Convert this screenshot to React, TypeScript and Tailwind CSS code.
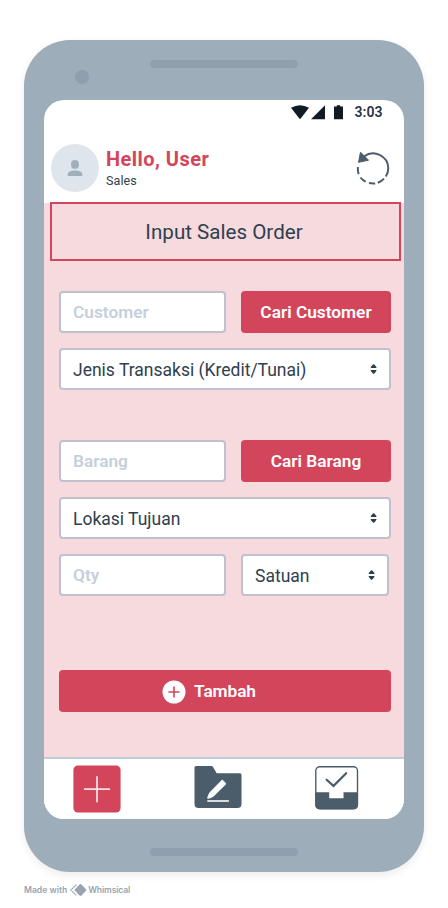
import type { ReactNode } from "react";

function SortArrows() {
  return (
    <svg width="8" height="10" viewBox="0 0 8 10" fill="#2c3e4a" className="mb-[2px] shrink-0">
      <path d="M1.3 4 Q.2 4 .8 3.100 L2.900.5 Q3.600 0 4.300.5 L6.400 3.100 Q7 4 5.900 4Z" />
      <path d="M1.3 6 Q.2 6 .8 6.900 L2.900 9.500 Q3.600 10 4.300 9.500 L6.400 6.900 Q7 6 5.900 6Z" />
    </svg>
  );
}

function Field({ children }: { children: ReactNode }) {
  return (
    <div className="flex h-[42px] w-[167px] items-center rounded-[4px] border-2 border-[#bfc1ce] bg-white pt-[2px] pl-3 text-[17.3px] font-semibold text-[#c5d0db]">
      {children}
    </div>
  );
}

function Select({ children, className }: { children: ReactNode; className?: string }) {
  return (
    <div className={`flex h-[42px] items-center justify-between rounded-[4px] border-2 border-[#bfc1ce] bg-white pt-[2px] pr-[11px] pl-3 text-[17.5px] text-[#2f404e] ${className ?? ""}`}>
      <span className="whitespace-nowrap">{children}</span>
      <SortArrows />
    </div>
  );
}

function Button({ children, className }: { children: ReactNode; className: string }) {
  return (
    <div className={`flex h-[42px] items-center justify-center rounded-[4px] bg-[#d3455b] pt-[2px] text-[17.3px] font-semibold whitespace-nowrap text-white ${className}`}>
      {children}
    </div>
  );
}

function StatusBar() {
  return (
    <div className="flex h-[25px] items-center pl-[247px]">
      <svg width="52" height="15" viewBox="0 0 52 15" fill="#101b24">
        <path d="M0 2.8 Q9 -2.3 18 2.8 L9.7 13.6 Q9 14.4 8.3 13.6Z" />
        <path d="M34 .3V14.3H20Z" />
        <path d="M45.800 .2h3.400v1.200h2.800v12.900h-9V1.400h2.800Z" />
      </svg>
      <span className="ml-[11.5px] text-[14px] font-semibold tracking-[0.1px] text-[#263541]">3:03</span>
    </div>
  );
}

function Header() {
  return (
    <div className="flex h-[78px] items-start pt-[19px] pr-[14px] pl-[7px]">
      <div className="flex size-12 items-center justify-center rounded-full bg-[#dfe5ec]">
        <svg width="16" height="16" viewBox="0 0 16 16" fill="#9fafbc">
          <rect x="4.100" y="0" width="7.800" height="8.800" rx="3.900" />
          <path d="M.7 16v-1.500C.7 11.500 4 10.500 8 10.500s7.300 1 7.300 4V16Z" />
        </svg>
      </div>
      <div className="ml-[7px] flex flex-col">
        <span className="mt-[2px] text-[20px] leading-[26px] font-bold tracking-[0.45px] text-[#d3455b]">Hello, User</span>
        <span className="text-[12.500px] leading-[18px] tracking-[0.1px] text-[#2f404e]">Sales</span>
      </div>
      <svg width="34" height="34" viewBox="0 0 34 34" className="mt-[7px] ml-auto" fill="none" stroke="#4b5d6b" strokeWidth="2">
        <path d="M8 5.500A15.200 15.200 0 0 1 32.300 17Q32.300 22 29.800 25.500" />
        <path d="M28 27.700Q25.500 30.500 21.800 31.800M19.200 32.400Q16.500 32.800 13 32.100M9.700 30.700Q6.500 29.200 4.400 26.500M2.700 23.200Q1.500 20 1.900 16" />
        <path d="M4.500 1.200 12.500 9.200 2.500 11.300Z" fill="#4b5d6b" strokeWidth="1" strokeLinejoin="round" />
      </svg>
    </div>
  );
}

function NavBar() {
  return (
    <div className="flex h-[62px] items-start border-t-2 border-[#c0ccd6] bg-white pt-[6px] pl-[29px]">
      <svg width="48" height="48" viewBox="0 0 48 48">
        <rect x=".4" y=".4" width="47.200" height="47.200" rx="4.500" fill="#d3455b" />
        <path d="M24 12v24.500M11.800 24.200h24.500" stroke="#fbdfe3" strokeWidth="1.800" strokeLinecap="round" />
      </svg>
      <svg width="48" height="44" viewBox="0 0 48 44" className="ml-[73px]">
        <path d="M2 1H17.500Q18.500 1 19 1.900L22.700 8.300H46Q47.500 8.300 47.500 9.800V39Q47.500 43 43.500 43H4.500Q.5 43 .5 39V2.500Q.5 1 2 1Z" fill="#4b5d6b" />
        <path d="M28.300 15 32 18.700 19.500 31Q17 33 13.700 33.300Q14.200 30 16 27.500Z" fill="#fff" stroke="#fff" strokeWidth="1" strokeLinejoin="round" />
        <path d="M14 36H34.200" stroke="#d5dde3" strokeWidth="1.900" strokeLinecap="round" />
      </svg>
      <svg width="44" height="46" viewBox="0 0 44 46" className="ml-[73px]">
        <rect x=".8" y="1.700" width="41.700" height="42" rx="4" fill="#fff" stroke="#4b5d6b" strokeWidth="1.400" />
        <path d="M.3 27.300H14.200V33.300H28.500V27.300H43V39.800Q43 44.300 38.500 44.300H4.800Q.3 44.300 .3 39.800Z" fill="#4b5d6b" />
        <path d="M11.600 14.700 18.500 20.900 31.200 8.200" fill="none" stroke="#4b5d6b" strokeWidth="2.200" strokeLinecap="round" />
      </svg>
    </div>
  );
}

export default function App() {
  return (
    <div className="h-[908px] w-[448px] overflow-hidden bg-white pt-10 pl-6 [font-family:Roboto,'Liberation_Sans',sans-serif]">
      <div className="h-[832px] w-[400px] rounded-[46px] bg-[#9eadba] px-5 shadow-[0_3px_8px_rgba(0,0,0,0.08)]">
        <div className="flex h-[60px] items-start">
          <div className="mt-[30px] ml-[31px] size-[14px] rounded-full bg-[#8f9fae]" />
          <div className="mt-5 ml-[61px] h-2 w-[148px] rounded-full bg-[#8f9fae]" />
        </div>
        <div className="flex h-[719px] flex-col overflow-hidden rounded-[20px] bg-white">
          <StatusBar />
          <Header />
          <div className="h-[554px] bg-[#f6dadd] pl-[6px]">
            <div className="-mt-px flex h-[59px] w-[351px] items-center justify-center border-2 border-[#d3455b] bg-[#f6dadd] pt-[2px] pr-[3px] text-[20.6px] text-[#2f404e]">
              Input Sales Order
            </div>
            <div className="mt-[30px] ml-[9px] flex w-[332px] flex-col gap-[15px]">
              <div className="flex justify-between">
                <Field>Customer</Field>
                <Button className="w-[150px]">Cari Customer</Button>
              </div>
              <Select>Jenis Transaksi (Kredit/Tunai)</Select>
              <div className="mt-[35px] flex justify-between">
                <Field>Barang</Field>
                <Button className="w-[150px]">Cari Barang</Button>
              </div>
              <Select>Lokasi Tujuan</Select>
              <div className="flex gap-[15px]">
                <Field>Qty</Field>
                <Select className="w-[148px]">Satuan</Select>
              </div>
              <Button className="mt-[59px] gap-[8px] pr-[32px]">
                <svg width="24" height="24" viewBox="0 0 24 24" className="mb-px">
                  <circle cx="12" cy="12" r="11.500" fill="#fff" />
                  <path d="M12 7v10M7 12h10" stroke="#d3455b" strokeWidth="1.600" strokeLinecap="round" />
                </svg>
                <span className="tracking-[-0.1px]">Tambah</span>
              </Button>
            </div>
          </div>
          <NavBar />
        </div>
        <div className="mt-[29px] ml-[106px] h-2 w-[148px] rounded-full bg-[#8f9fae]" />
      </div>
      <div className="mt-[11px] flex h-[14px] items-center text-[8.6px] font-semibold text-[#98a4af] [font-family:Inter,sans-serif]">
        <span className="whitespace-nowrap">Made with</span>
        <svg width="17" height="12" viewBox="0 0 17 12" className="mr-[1px] ml-[3px] shrink-0">
          <path d="M6.300.6.900 6 6.300 11.400" fill="none" stroke="#98a4af" strokeWidth="1.300" strokeDasharray="1.800 .5" />
          <path d="M9.500.5Q10.500-.3 11.500.5L16 5.200Q16.700 6 16 6.800L11.500 11.500Q10.500 12.300 9.500 11.500L5 6.800Q4.300 6 5 5.200Z" fill="#98a4af" />
        </svg>
        <span className="tracking-[-0.15px]">Whimsical</span>
      </div>
    </div>
  );
}
